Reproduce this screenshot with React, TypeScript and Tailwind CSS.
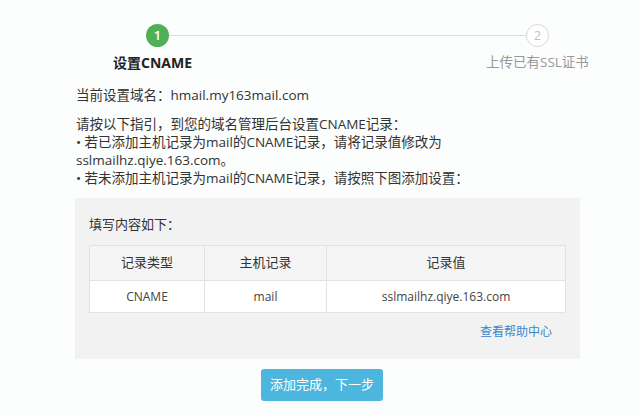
export default function App() {
  const font = { fontFamily: '"Open Sans", "Noto Sans CJK SC", sans-serif' };
  return (
    <div className="h-[415px] w-[640px] overflow-hidden bg-[#fcfdfd] text-[13.5px] text-[#333]" style={font}>
      {/* 步骤条 */}
      <div className="relative mx-auto h-[80px] w-[640px]">
        <div className="absolute left-[168px] right-[114px] top-[35px] h-px bg-[#dcdcdc]" />
        <div className="absolute left-[146px] top-[24px] flex h-[23px] w-[23px] items-center justify-center rounded-full bg-[#4fb155] text-[13px] font-semibold text-white">
          1
        </div>
        <div className="absolute left-[526px] top-[24px] flex h-[23px] w-[23px] items-center justify-center rounded-full border border-[#d9d9d9] bg-white text-[13px] text-[#c4c4c4]">
          2
        </div>
        <div className="absolute left-[113px] top-[52px] text-[14px] font-bold text-[#222]">设置CNAME</div>
        <div className="absolute left-[486px] top-[52px] text-[13.5px] text-[#999]">上传已有SSL证书</div>
      </div>

      <div className="px-[76px]">
        <p className="mt-[6px] leading-[18px]">当前设置域名：hmail.my163mail.com</p>

        <div className="mt-[11px] leading-[18px]">
          <p>请按以下指引，到您的域名管理后台设置CNAME记录：</p>
          <p>• 若已添加主机记录为mail的CNAME记录，请将记录值修改为</p>
          <p>sslmailhz.qiye.163.com。</p>
          <p>• 若未添加主机记录为mail的CNAME记录，请按照下图添加设置：</p>
        </div>
      </div>

      <div className="mx-[75px] mt-[11px] w-[505px] bg-[#f2f2f3] px-[14px] pb-[18px] pt-[17px]">
        <p className="text-[13px] leading-[18px]">填写内容如下：</p>
        <table className="mt-[12px] w-full border-collapse text-center">
          <thead>
            <tr className="h-[35px] bg-[#f5f5f6] text-[13px] text-[#333]">
              <th className="w-[115px] border border-[#e2e2e2] font-normal">记录类型</th>
              <th className="w-[122px] border border-[#e2e2e2] font-normal">主机记录</th>
              <th className="border border-[#e2e2e2] font-normal">记录值</th>
            </tr>
          </thead>
          <tbody>
            <tr className="h-[32px] bg-white text-[12px] text-[#444]">
              <td className="border border-[#e2e2e2]">CNAME</td>
              <td className="border border-[#e2e2e2]">mail</td>
              <td className="border border-[#e2e2e2]">sslmailhz.qiye.163.com</td>
            </tr>
          </tbody>
        </table>
        <div className="mr-[14px] mt-[10px] text-right text-[12px] leading-[18px] text-[#3a86cf]">查看帮助中心</div>
      </div>

      <div className="mt-[10px] flex justify-center">
        <button className="ml-[4px] h-[32px] w-[122px] rounded-[3px] bg-[#4db6de] text-[13px] text-white">
          添加完成，下一步
        </button>
      </div>
    </div>
  );
}
